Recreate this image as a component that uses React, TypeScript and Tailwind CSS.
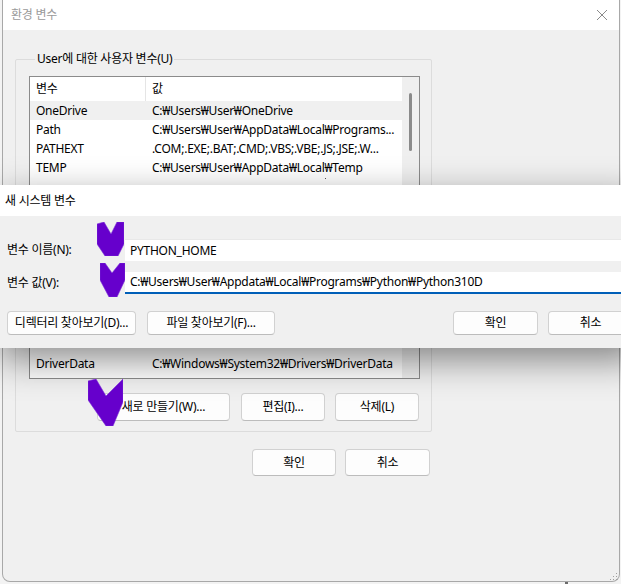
import React from "react";

type BtnProps = { children: React.ReactNode; className?: string };

function Btn({ children, className = "" }: BtnProps) {
  return (
    <div
      className={`flex shrink-0 items-center justify-center rounded-[4px] border border-[#d1d1d1] border-b-[#bcbcbc] bg-[#fdfdfd] text-[12px] text-black ${className}`}
    >
      {children}
    </div>
  );
}

type RowProps = { name: string; value: string; className?: string };

function Row({ name, value, className = "" }: RowProps) {
  return (
    <div className={`flex h-[19px] shrink-0 items-center whitespace-nowrap ${className}`}>
      <div className="w-[116px] shrink-0 overflow-hidden pl-[6px]">{name}</div>
      <div className="min-w-0 flex-1 overflow-hidden pl-[6px]">{value}</div>
    </div>
  );
}

function Mark({ className, w, h, points }: { className: string; w: number; h: number; points: string }) {
  return (
    <svg className={`absolute z-20 ${className}`} width={w} height={h} viewBox={`0 0 ${w} ${h}`}>
      <polygon points={points} fill="#6600cc" stroke="#7a2ed6" strokeWidth="0.6" />
    </svg>
  );
}

export default function App() {
  return (
    <div className="relative h-[584px] w-[621px] overflow-hidden bg-[#f3f3f3] font-['Noto_Sans','Noto_Sans_CJK_KR',sans-serif] text-[12px] leading-[16px] tracking-[-0.25px] text-black">
      {/* background window: 환경 변수 */}
      <div className="ml-[2px] flex h-[582px] w-[618px] flex-col overflow-hidden rounded-b-[8px] border border-t-0 border-[#a8a8a8] bg-[#f0f0f0]">
        <div className="flex h-[30px] shrink-0 items-center justify-between bg-white pl-[8px] pr-[11px] text-[#9a9a9a]">
          <span>환경 변수</span>
          <svg width="12" height="12" viewBox="0 0 12 12">
            <path d="M1 1L11 11M11 1L1 11" stroke="#8a8a8a" strokeWidth="1" />
          </svg>
        </div>
        <div className="flex flex-col pl-[12px]">
          <fieldset className="mt-[21px] w-[417px] rounded-[2px] border border-[#dcdcdc] pb-[10px] pl-[13px] pr-[11px] pt-[9px]">
            <legend className="ml-[6px] px-[2px] leading-[16px]">User에 대한 사용자 변수(U)</legend>
            {/* list view */}
            <div className="flex h-[303px] border border-[#8b8b8b] bg-white">
              <div className="flex min-w-0 flex-1 flex-col">
                <div className="flex h-[24px] shrink-0 items-center">
                  <div className="flex h-full w-[116px] items-center border-r border-[#e5e5e5] pl-[6px]">변수</div>
                  <div className="pl-[6px]">값</div>
                </div>
                <Row name="OneDrive" value="C:₩Users₩User₩OneDrive" className="bg-[#f0f0f0]" />
                <Row name="Path" value="C:₩Users₩User₩AppData₩Local₩Programs..." />
                <Row name="PATHEXT" value=".COM;.EXE;.BAT;.CMD;.VBS;.VBE;.JS;.JSE;.W..." />
                <Row name="TEMP" value="C:₩Users₩User₩AppData₩Local₩Temp" />
                <div className="relative min-h-0 flex-1">
                  <div className="absolute left-[295px] top-[1px] h-[1px] w-[1px] bg-[#555]" />
                </div>
                <Row name="DriverData" value="C:₩Windows₩System32₩Drivers₩DriverData" />
                <div className="h-[5px] shrink-0" />
              </div>
              <div className="w-[17px] shrink-0 bg-[#efefef]">
                <div className="ml-[7px] mt-[16px] h-[58px] w-[3px] rounded-full bg-[#8a8a8a]" />
              </div>
            </div>
            <div className="mt-[14px] flex justify-end pr-[1px]">
              <Btn className="h-[28px] w-[133px]">새로 만들기(W)...</Btn>
              <Btn className="ml-[11px] h-[28px] w-[84px]">편집(I)...</Btn>
              <Btn className="ml-[10px] h-[28px] w-[84px]">삭제(L)</Btn>
            </div>
          </fieldset>
          <div className="mt-[17px] flex gap-[9px] pl-[237px]">
            <Btn className="h-[27px] w-[84px]">확인</Btn>
            <Btn className="h-[27px] w-[85px]">취소</Btn>
          </div>
        </div>
      </div>

      {/* resize grip */}
      <svg className="absolute left-[609px] top-[572px]" width="9" height="9" viewBox="0 0 9 9">
        <rect x="7" y="1" width="1" height="1" fill="#a0a0a0" />
        <rect x="4" y="4" width="1" height="1" fill="#a0a0a0" />
        <rect x="7" y="4" width="1" height="1" fill="#a0a0a0" />
        <rect x="1" y="7" width="1" height="1" fill="#a0a0a0" />
        <rect x="4" y="7" width="1" height="1" fill="#a0a0a0" />
        <rect x="7" y="7" width="1" height="1" fill="#a0a0a0" />
      </svg>
      <div className="absolute left-[565px] top-[582px] h-[2px] w-[3px] bg-[#6b6b6b]" />

      {/* foreground window: 새 시스템 변수 */}
      <div className="absolute left-0 top-[185px] z-10 flex h-[163px] w-[640px] flex-col bg-[#f0f0f0] shadow-[0_12px_34px_rgba(0,0,0,0.45)]">
        <div className="flex h-[31px] shrink-0 items-center bg-white pl-[5px]">새 시스템 변수</div>
        <div className="flex flex-col px-[7px] pt-[23px]">
          <div className="flex h-[22px] items-center">
            <div className="w-[118px] shrink-0">변수 이름(N):</div>
            <div className="flex h-full flex-1 items-center border-t border-[#e8e8e8] bg-white pl-[5px]">PYTHON_HOME</div>
          </div>
          <div className="mt-[11px] flex h-[22px] items-center">
            <div className="w-[118px] shrink-0">변수 값(V):</div>
            <div className="flex h-full flex-1 items-center border-b-2 border-[#005fb8] bg-white pl-[5px]">
              C:₩Users₩User₩Appdata₩Local₩Programs₩Python₩Python310D
            </div>
          </div>
          <div className="mt-[17px] flex h-[24px] items-stretch">
            <Btn className="w-[129px]">디렉터리 찾아보기(D)...</Btn>
            <Btn className="ml-[11px] w-[128px]">파일 찾아보기(F)...</Btn>
            <Btn className="ml-auto w-[85px] border-[#005fb8] border-b-[#005fb8]">확인</Btn>
            <Btn className="ml-[10px] w-[85px]">취소</Btn>
          </div>
        </div>
      </div>

      {/* purple annotation marks */}
      <Mark className="left-[97px] top-[222px]" w={27} h={34} points="0,2 7,0 14,12 20,0 27,0 27,22 21,34 8,34 0,22" />
      <Mark className="left-[100px] top-[263px]" w={25} h={34} points="0,0 5,0 12,10 20,0 25,0 25,17 17,34 9,34 0,17" />
      <Mark className="left-[88px] top-[379px]" w={35} h={47} points="0,2 8,0 18,17 35,0 35,23 25,47 18,47 0,21" />
    </div>
  );
}
